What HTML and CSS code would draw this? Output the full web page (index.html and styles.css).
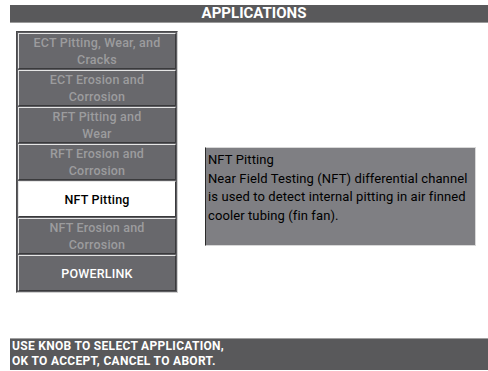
FILE: index.html
```html
<!DOCTYPE html>
<html>
<head>
<meta charset="utf-8">
<link rel="stylesheet" href="styles.css">
</head>
<body>
<div class="screen">
  <div class="titlebar">APPLICATIONS</div>
  <div class="main">
    <div class="list">
      <div class="btn disabled">ECT Pitting, Wear, and<br>Cracks</div>
      <div class="btn disabled">ECT Erosion and<br>Corrosion</div>
      <div class="btn disabled">RFT Pitting and<br>Wear</div>
      <div class="btn disabled">RFT Erosion and<br>Corrosion</div>
      <div class="btn selected">NFT Pitting</div>
      <div class="btn disabled">NFT Erosion and<br>Corrosion</div>
      <div class="btn active">POWERLINK</div>
    </div>
    <div class="desc">
      <p>NFT Pitting</p>
      <p>Near Field Testing (NFT) differential channel is used to detect internal pitting in air finned cooler tubing (fin fan).</p>
    </div>
  </div>
  <div class="status">USE KNOB TO SELECT APPLICATION,<br>OK TO ACCEPT, CANCEL TO ABORT.</div>
</div>
</body>
</html>
```
FILE: styles.css
```css
html, body {
  margin: 0;
  padding: 0;
  background: #ffffff;
}
.screen {
  width: 488px;
  height: 371px;
  display: flex;
  flex-direction: column;
  font-family: Roboto, "Liberation Sans", sans-serif;
}
.titlebar {
  margin: 5px 0 0 10px;
  height: 17px;
  background: #59595b;
  border-bottom: 1px solid #9a9a9a;
  color: #ffffff;
  font-weight: bold;
  font-size: 15px;
  line-height: 17px;
  text-align: center;
  padding-left: 10px;
}
.main {
  display: flex;
  align-items: flex-start;
  height: 315px;
}
.list {
  margin: 8px 0 0 16px;
  width: 158px;
  padding: 1px;
  border: 1px solid #4a4a4c;
  border-right-color: #d0d0d0;
  border-bottom-color: #d0d0d0;
  background: #5e5e62;
  display: flex;
  flex-direction: column;
  gap: 1px;
}
.btn {
  box-sizing: border-box;
  height: 36px;
  border: 1px solid;
  border-color: #e6e6e6 #3a3a3c #3a3a3c #e6e6e6;
  background: #68686c;
  display: flex;
  align-items: center;
  justify-content: center;
  text-align: center;
  font-size: 12.5px;
  letter-spacing: 0.2px;
  font-weight: 500;
  line-height: 17px;
}
.btn.disabled {
  color: #9c9c9e;
}
.btn.selected {
  background: #ffffff;
  color: #000000;
}
.btn.active {
  color: #ffffff;
}
.desc {
  margin: 124px 0 0 27px;
  box-sizing: border-box;
  width: 271px;
  height: 99px;
  background: #7f7f83;
  border: 1px solid;
  border-color: #d8d8d8 #d8d8d8 #d8d8d8 #2a2a2a;
  padding: 3px 2px;
  color: #000000;
  font-size: 13px;
  letter-spacing: 0.1px;
  line-height: 18.5px;
  font-weight: 400;
}
.desc p {
  margin: 0;
}
.status {
  margin: 0 0 0 10px;
  height: 31px;
  background: #59595b;
  border-top: 1px solid #a0a0a0;
  color: #ffffff;
  font-size: 12px;
  letter-spacing: 0.3px;
  font-weight: bold;
  line-height: 15px;
  padding-left: 2px;
}
```
